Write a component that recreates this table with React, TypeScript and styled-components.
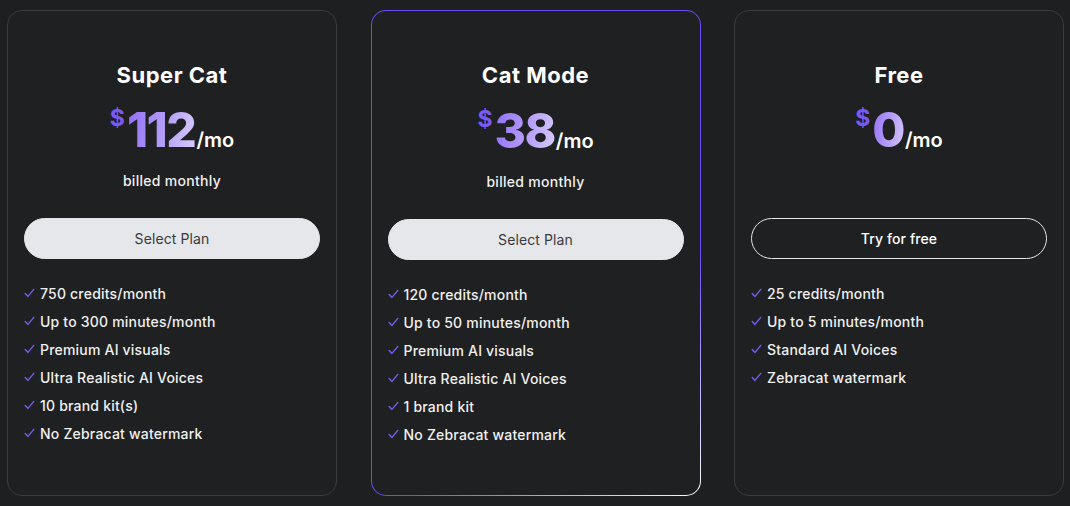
import React from "react";
import styled, { createGlobalStyle, css } from "styled-components";

const Global = createGlobalStyle`
  html, body { margin: 0; padding: 0; background: #1e1f21; }
  body { font-family: "Inter", "Noto Sans", sans-serif; -webkit-font-smoothing: antialiased; }
`;

const Grid = styled.div`
  display: grid;
  grid-template-columns: repeat(3, 330px);
  gap: 33.5px;
  padding: 10px 7px;
`;

const Card = styled.div<{ $featured?: boolean }>`
  box-sizing: border-box;
  height: 486px;
  border-radius: 15px;
  border: 1px solid #3b3c3f;
  background: #1f2022;
  padding: 51px 16px 0;
  display: flex;
  flex-direction: column;
  align-items: stretch;
  ${(p) =>
    p.$featured &&
    css`
      border: 1.5px solid transparent;
      background: linear-gradient(#1f2022, #1f2022) padding-box,
        linear-gradient(140deg, #6c4af8 0%, #6c4af8 68%, #ffffff 100%) border-box;
      padding-top: 51px;
    `}
`;

const Title = styled.h2`
  margin: 0;
  text-align: center;
  font-size: 22px;
  line-height: 26px;
  font-weight: 700;
  color: #ffffff;
  letter-spacing: 0.5px;
`;

const PriceRow = styled.div<{ $shift?: boolean }>`
  margin-top: ${(p) => (p.$shift ? 15 : 14)}px;
  display: flex;
  justify-content: center;
  align-items: baseline;
  height: 56px;
`;

const Dollar = styled.span`
  font-size: 23px;
  font-weight: 700;
  color: #7b5af4;
  align-self: flex-start;
  margin-top: 2px;
  margin-right: 2px;
`;

const Amount = styled.span`
  font-size: 48px;
  line-height: 56px;
  font-weight: 800;
  letter-spacing: -1.5px;
  background: linear-gradient(100deg, #8f6cf6 0%, #b9a3fa 60%, #d9cdfc 100%);
  -webkit-background-clip: text;
  background-clip: text;
  color: transparent;
`;

const Per = styled.span`
  font-size: 20px;
  font-weight: 600;
  color: #ffffff;
  margin-left: 1px;
`;

const Billed = styled.div<{ $hidden?: boolean }>`
  margin-top: 14px;
  text-align: center;
  font-size: 14px;
  line-height: 18px;
  font-weight: 500;
  letter-spacing: 0.3px;
  color: #f1f1f1;
  visibility: ${(p) => (p.$hidden ? "hidden" : "visible")};
`;

const PlanButton = styled.button<{ $outline?: boolean }>`
  margin-top: 28px;
  height: 41px;
  border-radius: 21px;
  font-family: inherit;
  font-size: 14px;
  letter-spacing: 0.1px;
  cursor: pointer;
  ${(p) =>
    p.$outline
      ? css`
          background: transparent;
          border: 1px solid #e6e6e6;
          color: #ffffff;
          font-weight: 500;
        `
      : css`
          background: #e5e7eb;
          border: 1px solid #e5e7eb;
          color: #3a3a3d;
        `}
`;

const Features = styled.ul`
  list-style: none;
  margin: 25px 0 0;
  padding: 0;
  display: flex;
  flex-direction: column;
  gap: 10px;
`;

const Feature = styled.li`
  display: flex;
  align-items: center;
  gap: 5px;
  height: 18px;
  font-size: 14px;
  font-weight: 500;
  letter-spacing: 0.2px;
  color: #f0f0f0;
`;

const CheckIcon = () => (
  <svg width="11" height="10" viewBox="0 0 11 10" fill="none">
    <path d="M1.2 5.4 L4 8.4 L9.8 1.4" stroke="#7b5af4" strokeWidth="1.4" strokeLinecap="round" strokeLinejoin="round" />
  </svg>
);

type Plan = {
  name: string;
  price: string;
  billed: boolean;
  cta: string;
  outline?: boolean;
  featured?: boolean;
  features: string[];
};

const plans: Plan[] = [
  {
    name: "Super Cat",
    price: "112",
    billed: true,
    cta: "Select Plan",
    features: [
      "750 credits/month",
      "Up to 300 minutes/month",
      "Premium AI visuals",
      "Ultra Realistic AI Voices",
      "10 brand kit(s)",
      "No Zebracat watermark",
    ],
  },
  {
    name: "Cat Mode",
    price: "38",
    billed: true,
    cta: "Select Plan",
    featured: true,
    features: [
      "120 credits/month",
      "Up to 50 minutes/month",
      "Premium AI visuals",
      "Ultra Realistic AI Voices",
      "1 brand kit",
      "No Zebracat watermark",
    ],
  },
  {
    name: "Free",
    price: "0",
    billed: false,
    cta: "Try for free",
    outline: true,
    features: ["25 credits/month", "Up to 5 minutes/month", "Standard AI Voices", "Zebracat watermark"],
  },
];

export default function App() {
  return (
    <>
      <Global />
      <Grid>
        {plans.map((p) => (
          <Card key={p.name} $featured={p.featured}>
            <Title>{p.name}</Title>
            <PriceRow $shift={p.featured}>
              <Dollar>$</Dollar>
              <Amount>{p.price}</Amount>
              <Per>/mo</Per>
            </PriceRow>
            <Billed $hidden={!p.billed}>billed monthly</Billed>
            <PlanButton $outline={p.outline}>{p.cta}</PlanButton>
            <Features>
              {p.features.map((f) => (
                <Feature key={f}>
                  <CheckIcon />
                  {f}
                </Feature>
              ))}
            </Features>
          </Card>
        ))}
      </Grid>
    </>
  );
}
